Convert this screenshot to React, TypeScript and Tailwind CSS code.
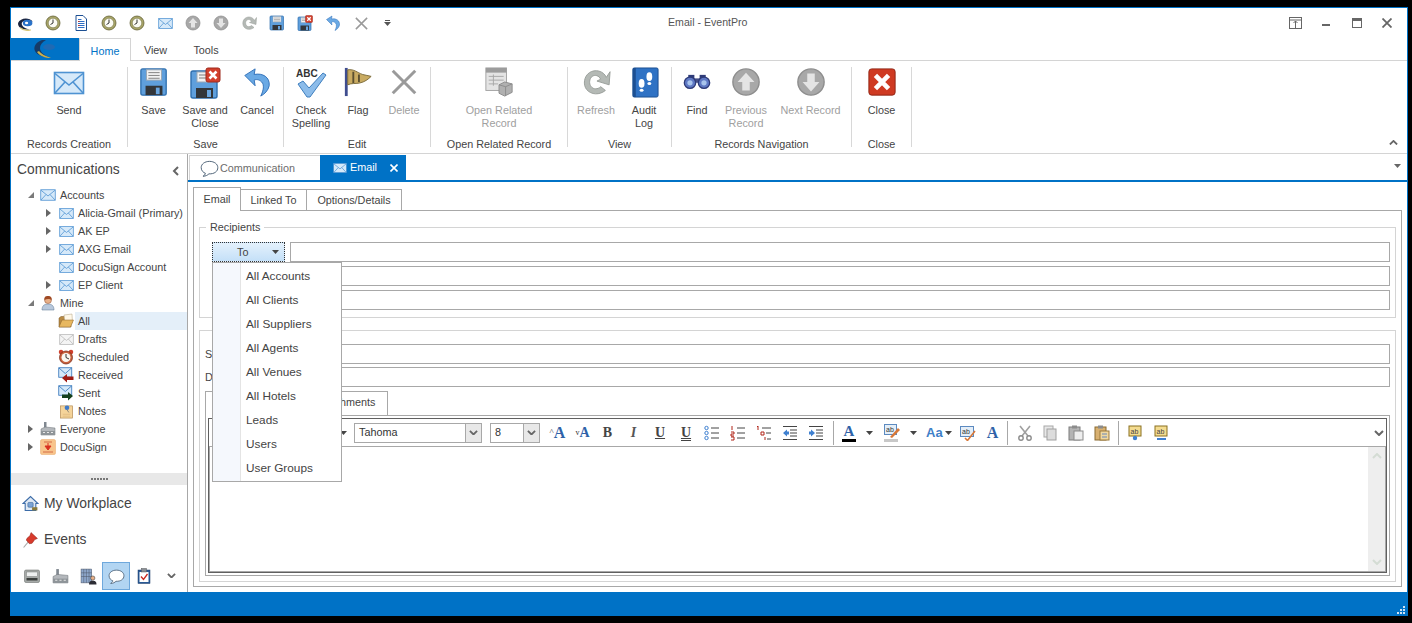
import type { ReactNode } from "react";

type P = { s?: number };

const Svg = ({ s = 32, children }: { s?: number; children: ReactNode }) => (
  <svg width={s} height={s} viewBox="0 0 32 32" className="shrink-0 block">
    {children}
  </svg>
);

const Env = ({ s, gray }: P & { gray?: boolean }) => (
  <Svg s={s}>
    <rect x="1.5" y="5.5" width="29" height="21" fill={gray ? "#f4f4f4" : "#d6e9f9"} stroke={gray ? "#b8b8b8" : "#4f93d2"} strokeWidth="1.6" />
    <path d="M2 6.5 16 18 30 6.5M2 26 12 15M30 26 20 15" fill="none" stroke={gray ? "#b8b8b8" : "#4f93d2"} strokeWidth="1.6" />
  </Svg>
);

const Floppy = ({ s }: P) => (
  <Svg s={s}>
    <rect x="2" y="2" width="27" height="28" rx="2" fill="#5f9fdc" stroke="#2f6fae" strokeWidth="1.4" />
    <rect x="8" y="3" width="16" height="11" fill="#f2f2f2" stroke="#9aa7b4" />
    <path d="M10 6h12M10 9h12M10 12h12" stroke="#7d7d7d" />
    <rect x="7" y="20" width="18" height="10" fill="#33363a" />
    <rect x="18" y="22" width="4" height="7" fill="#6aa6e0" />
  </Svg>
);

const FloppyX = ({ s }: P) => (
  <Svg s={s}>
    <rect x="2" y="4" width="26" height="27" rx="2" fill="#5f9fdc" stroke="#2f6fae" strokeWidth="1.4" />
    <rect x="8" y="5" width="13" height="10" fill="#f2f2f2" stroke="#9aa7b4" />
    <path d="M10 8h9M10 11h9" stroke="#7d7d7d" />
    <rect x="7" y="21" width="17" height="10" fill="#33363a" />
    <rect x="18" y="23" width="4" height="7" fill="#6aa6e0" />
    <rect x="17" y="1" width="14" height="14" rx="2" fill="#d23f2c" stroke="#9e2a1c" />
    <path d="M20.5 4.5 27.5 11.5M27.5 4.5 20.5 11.5" stroke="#fff" strokeWidth="2.6" />
  </Svg>
);

const Undo = ({ s }: P) => (
  <Svg s={s}>
    <path d="M3 9 14 2 13 8C22 6 30 11 29 20 28 25 24 29 20 31 23 25 24 19 21 16 18 13 15 13 13 14L14 20Z" fill="#6aa9e4" stroke="#2f6fb8" strokeWidth="1" />
  </Svg>
);

const XGray = ({ s }: P) => (
  <Svg s={s}>
    <path d="M4 4 28 28M28 4 4 28" stroke="#9a9a9a" strokeWidth="3.2" />
  </Svg>
);

const CheckAbc = ({ s }: P) => (
  <Svg s={s}>
    <text x="1" y="10" fontSize="10" fontWeight="700" fill="#333" fontFamily="Liberation Sans, sans-serif">ABC</text>
    <path d="M3 17 8 14 14 21 28 6 31 8 15 30 12 30Z" fill="#8cbcea" stroke="#3f7fbe" />
  </Svg>
);

const Flag = ({ s }: P) => (
  <Svg s={s}>
    <rect x="2" y="1" width="3" height="30" fill="#3f4d8f" />
    <path d="M5 3C12 2 15 6 21 8 24 9 27 9 30 10 27 13 23 16 18 17 14 18 9 17 5 19Z" fill="#c9ab62" stroke="#7a6a3a" />
    <path d="M11 5v12M17 8v8" stroke="#5c5030" strokeWidth="2" />
  </Svg>
);

const OpenRelated = ({ s }: P) => (
  <Svg s={s}>
    <rect x="2" y="1" width="22" height="24" fill="#e4e4e4" stroke="#a2a2a2" />
    <rect x="2" y="1" width="22" height="5" fill="#9c9c9c" />
    <path d="M5 10h16M5 14h16M5 18h10M10 8v12" stroke="#a8a8a8" />
    <path d="M16 19 22 16 30 18V27L22 31 16 28Z" fill="#b0b0b0" stroke="#8c8c8c" />
    <path d="M16 19 23 21 30 18M23 21V31" fill="none" stroke="#8c8c8c" />
  </Svg>
);

const Refresh = ({ s }: P) => (
  <Svg s={s}>
    <path d="M27 11C24 4 15 2 9 6 3 10 2 19 6 24 11 30 20 30 26 25L21 21C18 24 13 24 11 21 8 18 9 12 12 10 15 8 19 9 21 13L17 15 30 19 31 5Z" fill="#b4b9b5" stroke="#989d99" />
  </Svg>
);

const Audit = ({ s }: P) => (
  <Svg s={s}>
    <rect x="4" y="1" width="26" height="30" rx="1.5" fill="#2f72c4" stroke="#1c4f92" />
    <rect x="4" y="1" width="3" height="30" fill="#1c4f92" />
    <ellipse cx="21" cy="10" rx="3" ry="4.5" fill="#fff" />
    <ellipse cx="21" cy="17" rx="2" ry="1.6" fill="#fff" />
    <ellipse cx="13" cy="17" rx="3" ry="4.5" fill="#fff" />
    <ellipse cx="13" cy="24" rx="2" ry="1.6" fill="#fff" />
  </Svg>
);

const Binoculars = ({ s }: P) => (
  <Svg s={s}>
    <rect x="6" y="9" width="7" height="6" fill="#2e3b78" />
    <rect x="19" y="9" width="7" height="6" fill="#2e3b78" />
    <rect x="12" y="13" width="8" height="5" fill="#454f88" />
    <circle cx="8" cy="18" r="6.5" fill="#5e78c4" stroke="#2e3b78" strokeWidth="1.5" />
    <circle cx="24" cy="18" r="6.5" fill="#5e78c4" stroke="#2e3b78" strokeWidth="1.5" />
    <circle cx="8" cy="18" r="3" fill="#a8c4ec" />
    <circle cx="24" cy="18" r="3" fill="#a8c4ec" />
  </Svg>
);

const UpC = ({ s }: P) => (
  <Svg s={s}>
    <circle cx="16" cy="16" r="14" fill="#a8a8a8" stroke="#8e8e8e" strokeWidth="1.5" />
    <path d="M16 6 25 16H20V25H12V16H7Z" fill="#e4e4e4" />
  </Svg>
);

const DownC = ({ s }: P) => (
  <Svg s={s}>
    <circle cx="16" cy="16" r="14" fill="#a8a8a8" stroke="#8e8e8e" strokeWidth="1.5" />
    <path d="M16 26 25 16H20V7H12V16H7Z" fill="#e4e4e4" />
  </Svg>
);

const CloseRed = ({ s }: P) => (
  <Svg s={s}>
    <rect x="2" y="2" width="28" height="28" rx="3" fill="#cf3a22" stroke="#8e2212" />
    <path d="M9 9 23 23M23 9 9 23" stroke="#fff" strokeWidth="5" />
  </Svg>
);

const Clock = ({ s }: P) => (
  <Svg s={s}>
    <circle cx="16" cy="16" r="14" fill="#a8a568" stroke="#5f5c30" strokeWidth="1.5" />
    <circle cx="16" cy="16" r="9.5" fill="#fbfbf4" stroke="#6b6838" />
    <path d="M16 9V16L11 19" fill="none" stroke="#333" strokeWidth="2" />
  </Svg>
);

const Doc = ({ s }: P) => (
  <Svg s={s}>
    <path d="M6 1H20L27 8V31H6Z" fill="#fff" stroke="#1c4f92" strokeWidth="2" />
    <path d="M10 9H17M10 13H23M10 17H23M10 21H23M10 25H23" stroke="#2f6fc4" strokeWidth="2" />
    <path d="M10 13H13M10 21H13" stroke="#c8342a" strokeWidth="2" />
  </Svg>
);

const LogoEye = ({ s }: P) => (
  <Svg s={s}>
    <path d="M2 15C6 6 22 3 30 13 25 9 12 8 9 15 8 20 14 26 24 27 12 29 1 24 2 15Z" fill="#1b2540" />
    <ellipse cx="20" cy="15" rx="9" ry="6" fill="#2a72c8" />
    <ellipse cx="18" cy="15" rx="3" ry="2.5" fill="#fff" />
    <path d="M6 24C10 28 18 30 26 28" fill="none" stroke="#d8c878" strokeWidth="2" />
  </Svg>
);

const Person = ({ s }: P) => (
  <Svg s={s}>
    <path d="M4 30C4 21 9 18 16 18 23 18 28 21 28 30Z" fill="#b8c8dc" stroke="#56708e" />
    <circle cx="16" cy="10" r="7" fill="#e8b088" stroke="#8a4a2a" />
    <path d="M9 10C8 3 12 2 16 2 21 2 24 4 23 10 20 7 13 7 9 10Z" fill="#a04a24" />
  </Svg>
);

const Folder = ({ s }: P) => (
  <Svg s={s}>
    <path d="M2 28V10L6 7H13L16 10H26V28Z" fill="#b88a44" stroke="#7a5420" />
    <path d="M12 4 28 2 29 20 14 22Z" fill="#fff8e8" stroke="#b0a080" />
    <path d="M2 28 8 14H31L25 28Z" fill="#e8b860" stroke="#8a6228" />
  </Svg>
);

const Alarm = ({ s }: P) => (
  <Svg s={s}>
    <circle cx="6" cy="6" r="4.5" fill="#d0402c" />
    <circle cx="26" cy="6" r="4.5" fill="#d0402c" />
    <circle cx="16" cy="17" r="13" fill="#c8603c" stroke="#7a2a14" strokeWidth="1.5" />
    <circle cx="16" cy="17" r="9" fill="#fbf8f0" />
    <path d="M16 10V17L22 20" fill="none" stroke="#333" strokeWidth="2" />
  </Svg>
);

const EnvArrow = ({ s, color, dir }: P & { color: string; dir: "l" | "r" }) => (
  <Svg s={s}>
    <rect x="1.5" y="1.5" width="26" height="19" fill="#d6e9f9" stroke="#2f72b8" strokeWidth="1.6" />
    <path d="M2 2 14.5 13 27 2" fill="none" stroke="#2f72b8" strokeWidth="1.6" />
    <path d={dir === "l" ? "M8 22 18 14V19H31V26H18V31Z" : "M30 22 20 14V19H8V26H20V31Z"} fill={color} />
  </Svg>
);

const Note = ({ s }: P) => (
  <Svg s={s}>
    <rect x="3" y="4" width="26" height="26" fill="#f5d49a" stroke="#b08850" strokeWidth="1.4" />
    <path d="M8 22H24M8 26H24" stroke="#d0aa70" />
    <circle cx="17" cy="8" r="5" fill="#3f7ac8" />
    <path d="M17 12 21 18" stroke="#666" strokeWidth="1.5" />
  </Svg>
);

const Factory = ({ s }: P) => (
  <Svg s={s}>
    <rect x="8" y="2" width="5" height="14" fill="#808890" />
    <path d="M2 16 10 12 30 14V28H2Z" fill="#b4b8bc" stroke="#6a7076" />
    <path d="M2 20H30V28H2Z" fill="#8e9498" />
    <path d="M6 23h4M14 23h4M22 23h4" stroke="#e8e8e8" strokeWidth="2" />
  </Svg>
);

const DocuSign = ({ s }: P) => (
  <Svg s={s}>
    <rect x="1" y="1" width="30" height="30" rx="3" fill="#f8c48c" stroke="#e8a868" />
    <path d="M16 8V19M10 14 16 22 22 14Z" fill="#d83020" stroke="#d83020" strokeWidth="2" />
    <path d="M6 26H26M8 6H24" stroke="#c85030" strokeWidth="1.5" />
  </Svg>
);

const House = ({ s }: P) => (
  <Svg s={s}>
    <path d="M2 16 16 3 30 16 26 16V29H6V16Z" fill="#dfe9f4" stroke="#3c6ca8" strokeWidth="2" />
    <rect x="11" y="14" width="10" height="9" rx="2" fill="#7ca4d4" stroke="#2e5a92" />
    <rect x="19" y="23" width="10" height="6" fill="#8a7a3a" />
  </Svg>
);

const Pin = ({ s }: P) => (
  <Svg s={s}>
    <path d="M3 31 13 19" stroke="#a8a8a8" strokeWidth="2" />
    <path d="M17 3 29 14 24 16 19 23 14 24 8 17 10 13 15 9Z" fill="#d83a2c" stroke="#8e1e14" />
  </Svg>
);

const Printer = ({ s }: P) => (
  <Svg s={s}>
    <rect x="1" y="4" width="30" height="25" rx="3" fill="#a6aaa8" stroke="#5c605e" />
    <rect x="5" y="8" width="22" height="9" fill="#eef0f0" stroke="#7c807e" />
    <rect x="5" y="20" width="22" height="5" fill="#3c403e" />
  </Svg>
);

const BuildingP = ({ s }: P) => (
  <Svg s={s}>
    <rect x="2" y="2" width="20" height="26" fill="#8ea8cc" stroke="#50586a" />
    <path d="M7 2V28M12 2V28M17 2V28M2 9H22M2 16H22" stroke="#50586a" />
    <circle cx="24" cy="19" r="4" fill="#e8b088" stroke="#333" />
    <path d="M17 31C17 25 20 24 24 24 28 24 31 25 31 31Z" fill="#2c2c34" />
  </Svg>
);

const Bubble = ({ s }: P) => (
  <Svg s={s}>
    <path d="M16 4C8 4 2 8.5 2 14.5 2 20 6 23 9 24 9 26 7 28 5 29 10 29 13 27 15 25 24 25.5 30 21 30 14.5 30 8.5 24 4 16 4Z" fill="#fff" stroke="#4a5f74" strokeWidth="1.6" />
  </Svg>
);

const Clipboard = ({ s }: P) => (
  <Svg s={s}>
    <rect x="4" y="4" width="24" height="27" fill="#2a5a96" stroke="#1c3c68" />
    <rect x="7" y="8" width="18" height="20" fill="#fff" />
    <rect x="11" y="1" width="10" height="7" fill="#8a8e94" stroke="#54585c" />
    <path d="M10 17 15 23 23 12" fill="none" stroke="#c8281e" strokeWidth="2.6" />
  </Svg>
);

const Swoosh = () => (
  <svg width="24" height="20" viewBox="0 0 24 20" className="block">
    <path d="M9 1C3 3 0 8 2 12 4 16 10 18 17 19 11 16 7 13 7 9 7 6 9 3 13 1Z" fill="#163a66" />
    <path d="M4 13C7 17 12 19 18 19 13 17 8 15 6 12Z" fill="#c8b050" />
    <ellipse cx="16" cy="8" rx="6" ry="3" fill="#1f6ab4" />
  </svg>
);

const Caret = ({ c = "#444" }: { c?: string }) => (
  <svg width="7" height="4" viewBox="0 0 7 4" className="block shrink-0">
    <path d="M0 0H7L3.5 4Z" fill={c} />
  </svg>
);

const Chevron = ({ up, c = "#666", w = 10 }: { up?: boolean; c?: string; w?: number }) => (
  <svg width={w} height={(w * 6) / 10} viewBox="0 0 10 6" className="block shrink-0">
    <path d={up ? "M1 5 5 1 9 5" : "M1 1 5 5 9 1"} fill="none" stroke={c} strokeWidth="2" />
  </svg>
);

const Lines = ({ kind }: { kind: "bul" | "num" | "multi" | "out" | "in" }) => (
  <svg width="16" height="16" viewBox="0 0 16 16" className="block">
    {kind === "bul" && (
      <g>
        <circle cx="2.5" cy="3" r="1.7" fill="#fff" stroke="#3f80d0" />
        <circle cx="2.5" cy="8" r="1.7" fill="#fff" stroke="#3f80d0" />
        <circle cx="2.5" cy="13" r="1.7" fill="#fff" stroke="#3f80d0" />
        <path d="M7 3H15M7 8H15M7 13H15" stroke="#444" />
      </g>
    )}
    {kind === "num" && (
      <g>
        <path d="M2 1V5M1 7H4V9H1V11H4M1 12H4V15H1" fill="none" stroke="#b02418" />
        <path d="M7 3H15M7 8H15M7 13H15" stroke="#444" />
      </g>
    )}
    {kind === "multi" && (
      <g>
        <path d="M1 2 2 1V5" fill="none" stroke="#b02418" />
        <path d="M5 7H8V10H5ZM9 12V15" fill="none" stroke="#b02418" />
        <path d="M6 3H15M10 8H15M11 14H15" stroke="#444" />
      </g>
    )}
    {kind === "out" && (
      <g>
        <path d="M1 1.5H15M8 5H15M8 8H15M8 11H15M1 14.5H15" stroke="#444" />
        <path d="M1 8 5 4.5V6.5H7V9.5H5V11.5Z" fill="#3f80d0" />
      </g>
    )}
    {kind === "in" && (
      <g>
        <path d="M1 1.5H15M8 5H15M8 8H15M8 11H15M1 14.5H15" stroke="#444" />
        <path d="M7 8 3 4.5V6.5H1V9.5H3V11.5Z" fill="#3f80d0" />
      </g>
    )}
  </svg>
);

const Scissors = () => (
  <svg width="16" height="16" viewBox="0 0 16 16" className="block">
    <path d="M3 1 11 11M13 1 5 11" stroke="#a0a0a0" strokeWidth="1.6" />
    <circle cx="4" cy="13" r="2.2" fill="none" stroke="#8c8c8c" strokeWidth="1.4" />
    <circle cx="12" cy="13" r="2.2" fill="none" stroke="#8c8c8c" strokeWidth="1.4" />
  </svg>
);

const Copy = () => (
  <svg width="16" height="16" viewBox="0 0 16 16" className="block">
    <rect x="2" y="1" width="9" height="11" fill="#e8e8e8" stroke="#a8a8a8" />
    <rect x="5" y="4" width="9" height="11" fill="#dcdcdc" stroke="#a0a0a0" />
  </svg>
);

const Paste = ({ hot }: { hot?: boolean }) => (
  <svg width="16" height="16" viewBox="0 0 16 16" className="block">
    <rect x="1" y="2" width="11" height="13" fill={hot ? "#d8b070" : "#b4b4b4"} stroke={hot ? "#8a6a30" : "#7c7c7c"} />
    <rect x="4" y="0.5" width="5" height="3" fill="#8c8c8c" />
    <rect x="6" y="6" width="9" height="9" fill={hot ? "#f0d8a0" : "#eeeeee"} stroke={hot ? "#9c7a3c" : "#8c8c8c"} />
    {hot && <path d="M8 9H13M8 12H13" stroke="#6a88b8" />}
  </svg>
);

const Find = ({ two }: { two?: boolean }) => (
  <svg width="16" height="16" viewBox="0 0 16 16" className="block">
    <rect x="2" y="1" width="12" height="10" fill="#f4dc90" stroke="#8a7020" />
    <text x="3.5" y="9" fontSize="7" fill="#444" fontFamily="Liberation Sans, sans-serif">ab</text>
    {two ? <path d="M4 14H13" stroke="#3f80d0" strokeWidth="2" /> : <circle cx="8" cy="13" r="2.2" fill="#3f80d0" />}
  </svg>
);

const PenBox = () => (
  <svg width="16" height="18" viewBox="0 0 16 18" className="block">
    <rect x="0.5" y="0.5" width="12" height="10" fill="#e4eef8" stroke="#5c8ac0" />
    <text x="2" y="8" fontSize="7" fill="#333" fontFamily="Liberation Sans, sans-serif">ab</text>
    <path d="M6 13 14 4 16 6 8 14Z" fill="#d87838" />
    <rect x="0" y="15" width="14" height="3" fill="#c8c8c8" />
  </svg>
);

const SpellBox = () => (
  <svg width="16" height="16" viewBox="0 0 16 16" className="block">
    <rect x="0.5" y="1.5" width="13" height="10" fill="#e4eef8" stroke="#5c8ac0" />
    <text x="2" y="9" fontSize="7" fill="#333" fontFamily="Liberation Sans, sans-serif">ab</text>
    <path d="M5 13 7.5 15.5 15 6" fill="none" stroke="#d87838" strokeWidth="1.6" />
  </svg>
);

const Tree = ({ arrow, icon, label, sel, sub }: { arrow?: "open" | "closed"; icon: ReactNode; label: string; sel?: boolean; sub?: boolean }) => (
  <div className={`flex h-[18px] items-center ${sub ? "pl-[34px]" : "pl-[16px]"}`}>
    <span className="flex w-[7px] shrink-0 justify-center">
      {arrow === "open" && <span className="block h-0 w-0 border-b-[6px] border-l-[6px] border-b-[#7a7a7a] border-l-transparent" />}
      {arrow === "closed" && <span className="block h-0 w-0 border-y-[4px] border-l-[5px] border-y-transparent border-l-[#666]" />}
    </span>
    <span className="ml-[6px] flex w-[16px] shrink-0 justify-center">{icon}</span>
    <span className={`ml-[1px] flex h-[18px] flex-1 items-center whitespace-nowrap pl-[3px] ${sel ? "bg-[#e4eff9]" : ""}`}>{label}</span>
  </div>
);

const RibbonBtn = ({ icon, label, w, off }: { icon: ReactNode; label: ReactNode; w: string; off?: boolean }) => (
  <div className={`flex shrink-0 flex-col items-center ${w}`}>
    <div className="h-[32px]">{icon}</div>
    <div className={`mt-[5px] text-center leading-[13px] ${off ? "text-[#a0a0a0]" : "text-[#444]"}`}>{label}</div>
  </div>
);

const Group = ({ label, w, children }: { label: string; w: string; children: ReactNode }) => (
  <>
    <div className={`flex h-[84px] shrink-0 flex-col ${w}`}>
      <div className="flex h-[70px] justify-center">{children}</div>
      <div className="text-center leading-[14px] text-[#444]">{label}</div>
    </div>
    <div className="h-[80px] w-px shrink-0 bg-[#d8d8d8]" />
  </>
);

const Tool = ({ w = "w-[26px]", children }: { w?: string; children: ReactNode }) => (
  <div className={`flex h-[20px] shrink-0 items-center justify-center ${w}`}>{children}</div>
);

const QaSlot = ({ children }: { children: ReactNode }) => (
  <div className="flex h-[16px] w-[28px] shrink-0 items-center justify-center">{children}</div>
);

const Input = ({ w }: { w: string }) => <div className={`h-[20px] border border-[#a8a8a8] bg-white ${w}`} />;

const menuItems = ["All Accounts", "All Clients", "All Suppliers", "All Agents", "All Venues", "All Hotels", "Leads", "Users", "User Groups"];

export default function App() {
  return (
    <div className="h-[623px] w-[1412px] overflow-hidden bg-black pl-[10px] pt-[7px] text-[10.8px] text-[#444]" style={{ fontFamily: '"Liberation Sans", sans-serif' }}>
      <div className="flex h-[609px] w-[1398px] flex-col border-x border-t border-[#0072c6] bg-white">
        {/* title bar */}
        <div className="flex h-[30px] shrink-0 items-center">
          <QaSlot><LogoEye s={17} /></QaSlot>
          <QaSlot><Clock s={16} /></QaSlot>
          <QaSlot><Doc s={16} /></QaSlot>
          <QaSlot><Clock s={16} /></QaSlot>
          <QaSlot><Clock s={16} /></QaSlot>
          <QaSlot><Env s={15} /></QaSlot>
          <QaSlot><UpC s={16} /></QaSlot>
          <QaSlot><DownC s={16} /></QaSlot>
          <QaSlot><Refresh s={16} /></QaSlot>
          <QaSlot><Floppy s={16} /></QaSlot>
          <QaSlot><FloppyX s={16} /></QaSlot>
          <QaSlot><Undo s={16} /></QaSlot>
          <QaSlot><XGray s={15} /></QaSlot>
          <div className="ml-[9px] flex flex-col items-center gap-[1px]">
            <div className="h-px w-[5px] bg-[#555]" />
            <Caret c="#555" />
          </div>
          <div className="ml-[277px] w-[80px] whitespace-nowrap text-[10.6px] text-[#555]">Email - EventPro</div>
          <div className="ml-auto flex items-center pr-[15px]">
            <svg width="13" height="12" viewBox="0 0 13 12" className="block">
              <rect x="0.5" y="0.5" width="12" height="11" fill="none" stroke="#666" />
              <path d="M0 3H13M6.5 11V4M4.5 6 6.5 4 8.5 6" fill="none" stroke="#666" />
            </svg>
            <div className="mb-[3px] ml-[20px] h-[2px] w-[8px] self-end bg-[#666]" />
            <div className="ml-[22px] h-[10px] w-[10px] border border-t-[3px] border-[#666]" />
            <svg width="10" height="10" viewBox="0 0 10 10" className="ml-[20px] block">
              <path d="M0.5 0.5 9.5 9.5M9.5 0.5 0.5 9.5" stroke="#666" strokeWidth="1.8" />
            </svg>
          </div>
        </div>

        {/* ribbon tabs */}
        <div className="flex h-[23px] shrink-0 border-b border-[#d4d4d4]">
          <div className="flex h-[22px] w-[68px] items-center justify-center bg-[#0072c6]"><Swoosh /></div>
          <div className="z-10 flex h-[23px] w-[52px] items-center justify-center border-x border-t border-[#d4d4d4] bg-white pt-[3px] text-[#0072c6]">Home</div>
          <div className="flex h-[22px] w-[49px] items-center justify-center pt-[3px]">View</div>
          <div className="flex h-[22px] w-[52px] items-center justify-center pt-[3px]">Tools</div>
        </div>

        {/* ribbon */}
        <div className="flex h-[93px] shrink-0 border-b border-[#d4d4d4] pt-[6px]">
          <Group label="Records Creation" w="w-[116px]">
            <RibbonBtn w="w-[60px]" label="Send" icon={<Env s={32} />} />
          </Group>
          <Group label="Save" w="w-[155px]">
            <RibbonBtn w="w-[51px]" label="Save" icon={<Floppy s={30} />} />
            <RibbonBtn w="w-[52px]" label={<>Save and<br />Close</>} icon={<FloppyX s={32} />} />
            <RibbonBtn w="w-[52px]" label="Cancel" icon={<Undo s={30} />} />
          </Group>
          <Group label="Edit" w="w-[146px]">
            <RibbonBtn w="w-[54px]" label={<>Check<br />Spelling</>} icon={<CheckAbc s={32} />} />
            <RibbonBtn w="w-[40px]" label="Flag" icon={<Flag s={30} />} />
            <RibbonBtn w="w-[52px]" off label="Delete" icon={<XGray s={30} />} />
          </Group>
          <Group label="Open Related Record" w="w-[136px]">
            <RibbonBtn w="w-[90px]" off label={<>Open Related<br />Record</>} icon={<OpenRelated s={30} />} />
          </Group>
          <Group label="View" w="w-[103px]">
            <RibbonBtn w="w-[56px]" off label="Refresh" icon={<Refresh s={30} />} />
            <RibbonBtn w="w-[40px]" label={<>Audit<br />Log</>} icon={<Audit s={31} />} />
            <div className="w-[7px]" />
          </Group>
          <Group label="Records Navigation" w="w-[179px]">
            <RibbonBtn w="w-[50px]" label="Find" icon={<Binoculars s={28} />} />
            <RibbonBtn w="w-[48px]" off label={<>Previous<br />Record</>} icon={<UpC s={30} />} />
            <RibbonBtn w="w-[81px]" off label="Next Record" icon={<DownC s={30} />} />
          </Group>
          <Group label="Close" w="w-[59px]">
            <RibbonBtn w="w-[59px]" label="Close" icon={<CloseRed s={30} />} />
          </Group>
          <div className="ml-auto mr-[9px] mt-[73px]"><Chevron up w={9} /></div>
        </div>

        {/* main */}
        <div className="flex h-[438px] shrink-0">
          {/* navigation pane */}
          <div className="flex w-[177px] shrink-0 flex-col border-r border-[#a8a8a8]">
            <div className="flex h-[32px] items-center justify-between pl-[6px] pr-[8px] pt-[1px]">
              <span className="text-[13.8px] text-[#444]">Communications</span>
              <svg width="7" height="10" viewBox="0 0 7 10" className="block"><path d="M6 1 2 5 6 9" fill="none" stroke="#666" strokeWidth="2" /></svg>
            </div>
            <div className="h-[287px]">
              <Tree arrow="open" icon={<Env s={16} />} label="Accounts" />
              <Tree sub arrow="closed" icon={<Env s={15} />} label="Alicia-Gmail (Primary)" />
              <Tree sub arrow="closed" icon={<Env s={15} />} label="AK EP" />
              <Tree sub arrow="closed" icon={<Env s={15} />} label="AXG Email" />
              <Tree sub icon={<Env s={15} />} label="DocuSign Account" />
              <Tree sub arrow="closed" icon={<Env s={15} />} label="EP Client" />
              <Tree arrow="open" icon={<Person s={16} />} label="Mine" />
              <Tree sub icon={<Folder s={16} />} label="All" sel />
              <Tree sub icon={<Env s={15} gray />} label="Drafts" />
              <Tree sub icon={<Alarm s={16} />} label="Scheduled" />
              <Tree sub icon={<EnvArrow s={16} color="#a01c14" dir="l" />} label="Received" />
              <Tree sub icon={<EnvArrow s={16} color="#14401c" dir="r" />} label="Sent" />
              <Tree sub icon={<Note s={15} />} label="Notes" />
              <Tree arrow="closed" icon={<Factory s={16} />} label="Everyone" />
              <Tree arrow="closed" icon={<DocuSign s={16} />} label="DocuSign" />
            </div>
            <div className="flex h-[12px] items-center justify-center gap-[1px] bg-[#e8e8e8]">
              {[0, 1, 2, 3, 4, 5].map((i) => <span key={i} className="h-[2px] w-[2px] bg-[#777]" />)}
            </div>
            <div className="flex h-[36px] items-center pl-[11px]">
              <House s={17} />
              <span className="ml-[5px] text-[13.9px]">My Workplace</span>
            </div>
            <div className="flex h-[36px] items-center pl-[11px]">
              <Pin s={17} />
              <span className="ml-[5px] text-[13.9px]">Events</span>
            </div>
            <div className="flex h-[35px] items-start pl-[7px] pt-[5px]">
              <div className="flex h-[28px] w-[28px] items-center justify-center"><Printer s={16} /></div>
              <div className="flex h-[28px] w-[28px] items-center justify-center"><Factory s={17} /></div>
              <div className="flex h-[28px] w-[28px] items-center justify-center"><BuildingP s={17} /></div>
              <div className="flex h-[28px] w-[28px] items-center justify-center border border-[#6ea8dc] bg-[#b2d5f2]"><Bubble s={17} /></div>
              <div className="flex h-[28px] w-[28px] items-center justify-center"><Clipboard s={16} /></div>
              <div className="ml-[9px] mt-[11px]"><Chevron w={9} /></div>
            </div>
          </div>

          {/* document area */}
          <div className="flex min-w-0 flex-1 flex-col">
            <div className="flex h-[28px] shrink-0 items-start border-b-2 border-[#0072c6] pl-px pt-px">
              <div className="flex h-[25px] w-[131px] items-center border-l border-t border-[#d4d4d4] pl-[10px] text-[#6c6c6c]">
                <Bubble s={19} />
                <span className="ml-[1px]">Communication</span>
              </div>
              <div className="flex h-[25px] w-[86px] items-center bg-[#0072c6] pl-[13px] text-white">
                <Env s={14} />
                <span className="ml-[3px]">Email</span>
                <svg width="8" height="8" viewBox="0 0 8 8" className="ml-[13px] block"><path d="M0.5 0.5 7.5 7.5M7.5 0.5 0.5 7.5" stroke="#fff" strokeWidth="1.6" /></svg>
              </div>
              <div className="ml-auto mr-[6px] mt-[9px]"><Caret c="#666" /></div>
            </div>

            <div className="flex h-[28px] shrink-0 items-end pl-[5px]">
              <div className="z-10 -mb-px flex h-[24px] w-[48px] items-center justify-center border-x border-t border-[#a8a8a8] bg-white">Email</div>
              <div className="flex h-[21px] w-[66px] items-center justify-center border-r border-t border-[#a8a8a8]">Linked To</div>
              <div className="flex h-[21px] w-[95px] items-center justify-center border-r border-t border-[#a8a8a8]">Options/Details</div>
            </div>

            <div className="mx-[5px] h-[377px] border border-[#a8a8a8] px-[5px] pt-[16px]">
              {/* recipients */}
              <div className="relative h-[91px] border border-[#d4d4d4]">
                <div className="-mt-[8px] ml-[6px] w-fit bg-white px-[4px] leading-[14px]">Recipients</div>
                <div className="ml-[12px] mr-[5px] mt-[8px] flex flex-col gap-[4px]">
                  <div className="flex gap-[5px]">
                    <div className="flex h-[20px] w-[73px] items-center border border-dotted border-[#333] bg-gradient-to-b from-[#e4f1fc] to-[#c4e0f8] pl-[24px] pr-[5px]">
                      <span>To</span>
                      <span className="ml-auto"><Caret /></span>
                    </div>
                    <Input w="flex-1" />
                  </div>
                  <div className="flex pl-[78px]"><Input w="flex-1" /></div>
                  <div className="flex pl-[78px]"><Input w="flex-1" /></div>
                </div>

                {/* recipient type menu */}
                <div className="absolute left-[12px] top-[34px] z-20 flex h-[220px] w-[130px] border border-[#a8a8a8] bg-white text-[11.8px]">
                  <div className="w-[28px] border-r border-[#e4e4e4] bg-[#f5f8fd]" />
                  <div className="flex flex-col pl-[5px] pt-[2px]">
                    {menuItems.map((m) => <div key={m} className="flex h-[24px] items-center">{m}</div>)}
                  </div>
                </div>
              </div>

              {/* message */}
              <div className="mt-[12px] h-[252px] border border-[#d4d4d4] px-[5px] pt-[13px]">
                <div className="flex items-center">
                  <span className="w-[13px] shrink-0">Subject</span>
                  <Input w="flex-1" />
                </div>
                <div className="mt-[3px] flex items-center">
                  <span className="w-[13px] shrink-0">Date</span>
                  <Input w="flex-1" />
                </div>
                <div className="mt-[3px] flex h-[25px] items-end">
                  <div className="z-10 -mb-px h-[25px] w-[99px] border-x border-t border-[#a8a8a8] bg-white" />
                  <div className="flex h-[24px] w-[84px] items-center justify-center border-r border-t border-[#a8a8a8] pb-[2px]">Attachments</div>
                </div>
                <div className="h-[161px] border border-[#a8a8a8] p-[2px]">
                  <div className="flex h-[155px] flex-col border border-[#606060]">
                    <div className="flex h-[28px] shrink-0 items-center border-b border-[#a8a8a8] text-[#333]">
                      <div className="ml-[131px] w-[6px]"><Caret /></div>
                      <div className="ml-[8px] flex h-[20px] w-[128px] items-center border border-[#a8a8a8] pl-[4px]">
                        <span className="flex-1">Tahoma</span>
                        <span className="flex h-full w-[16px] items-center justify-center border-l border-[#a8a8a8] bg-[#e8e8e8]"><Chevron w={9} /></span>
                      </div>
                      <div className="ml-[8px] flex h-[20px] w-[50px] items-center border border-[#a8a8a8] pl-[4px]">
                        <span className="flex-1">8</span>
                        <span className="flex h-full w-[16px] items-center justify-center border-l border-[#a8a8a8] bg-[#e8e8e8]"><Chevron w={9} /></span>
                      </div>
                      <div className="ml-[5px] flex items-center" style={{ fontFamily: '"Liberation Serif", serif' }}>
                        <Tool w="w-[25px]"><span className="text-[9px] text-[#333]">^</span><span className="text-[16px] font-bold text-[#2f62a8]">A</span></Tool>
                        <Tool w="w-[25px]"><span className="text-[8px] text-[#333]">v</span><span className="text-[14px] font-bold text-[#2f62a8]">A</span></Tool>
                        <Tool w="w-[25px]"><span className="text-[14px] font-bold text-[#444]">B</span></Tool>
                        <Tool w="w-[27px]"><span className="text-[14px] font-bold italic text-[#555]">I</span></Tool>
                        <Tool><span className="text-[14px] font-bold text-[#444] underline">U</span></Tool>
                        <Tool><span className="border-b border-[#444] text-[14px] font-bold leading-[15px] text-[#444] underline">U</span></Tool>
                      </div>
                      <Tool><Lines kind="bul" /></Tool>
                      <Tool><Lines kind="num" /></Tool>
                      <Tool><Lines kind="multi" /></Tool>
                      <Tool><Lines kind="out" /></Tool>
                      <Tool><Lines kind="in" /></Tool>
                      <div className="ml-[4px] h-[24px] w-px bg-[#a8a8a8]" />
                      <div className="ml-[8px] flex h-[20px] w-[14px] flex-col items-center justify-center">
                        <span className="text-[15px] font-bold leading-[15px] text-[#2f62a8]" style={{ fontFamily: '"Liberation Serif", serif' }}>A</span>
                        <span className="h-[3px] w-[14px] bg-black" />
                      </div>
                      <div className="ml-[10px]"><Caret /></div>
                      <div className="ml-[11px]"><PenBox /></div>
                      <div className="ml-[10px]"><Caret /></div>
                      <span className="ml-[9px] text-[13px] font-bold text-[#3f80c8]">Aa</span>
                      <div className="ml-[2px]"><Caret /></div>
                      <div className="ml-[8px]"><SpellBox /></div>
                      <span className="ml-[11px] text-[16px] font-bold leading-[16px] text-[#2f62a8]" style={{ fontFamily: '"Liberation Serif", serif' }}>A</span>
                      <div className="ml-[9px] h-[24px] w-px bg-[#a8a8a8]" />
                      <Tool w="ml-[9px] w-[16px]"><Scissors /></Tool>
                      <Tool w="ml-[9px] w-[16px]"><Copy /></Tool>
                      <Tool w="ml-[10px] w-[16px]"><Paste /></Tool>
                      <Tool w="ml-[10px] w-[16px]"><Paste hot /></Tool>
                      <div className="ml-[8px] h-[24px] w-px bg-[#a8a8a8]" />
                      <Tool w="ml-[8px] w-[16px]"><Find /></Tool>
                      <Tool w="ml-[10px] w-[16px]"><Find two /></Tool>
                      <div className="ml-auto mr-[2px]"><Chevron w={10} /></div>
                    </div>
                    <div className="flex min-h-0 flex-1 justify-end border border-t-0 border-[#a8a8a8]">
                      <div className="flex w-[17px] flex-col items-center justify-between bg-[#eeeeee] py-[6px]">
                        <Chevron up c="#d4dcd4" />
                        <Chevron c="#d4dcd4" />
                      </div>
                    </div>
                  </div>
                </div>
              </div>
            </div>
          </div>
        </div>

        {/* status bar */}
        <div className="flex h-[24px] shrink-0 items-end justify-end bg-[#0072c6] pb-[2px] pr-[2px]">
          <div className="grid grid-cols-3 gap-px">
            <span /><span /><span className="h-[2px] w-[2px] bg-[#cfe3f4]" />
            <span /><span className="h-[2px] w-[2px] bg-[#cfe3f4]" /><span className="h-[2px] w-[2px] bg-[#cfe3f4]" />
            <span className="h-[2px] w-[2px] bg-[#cfe3f4]" /><span className="h-[2px] w-[2px] bg-[#cfe3f4]" /><span className="h-[2px] w-[2px] bg-[#cfe3f4]" />
          </div>
        </div>
      </div>
    </div>
  );
}
